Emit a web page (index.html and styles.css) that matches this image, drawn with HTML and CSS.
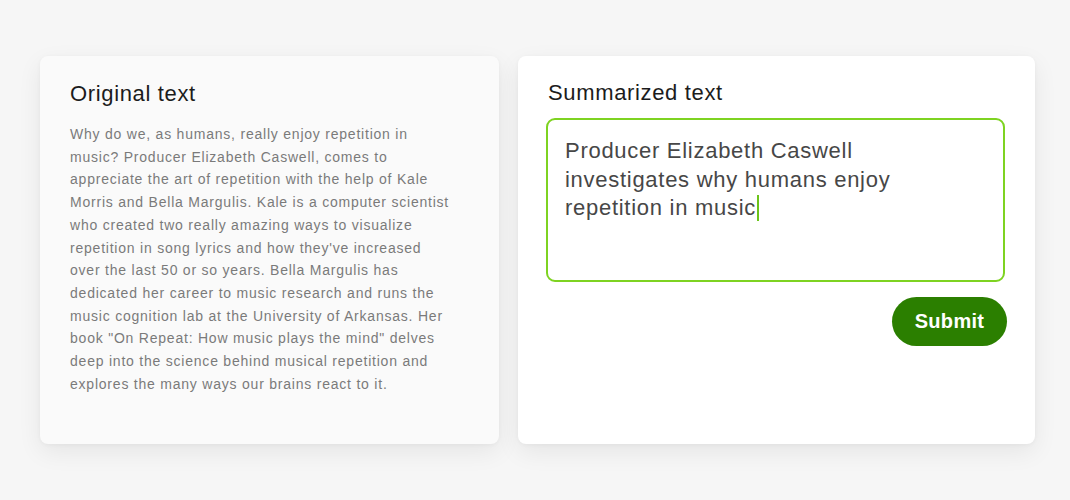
FILE: index.html
```html
<!DOCTYPE html>
<html lang="en">
<head>
<meta charset="utf-8">
<title>Summarize</title>
<link rel="stylesheet" href="styles.css">
</head>
<body>
<main class="page">
  <section class="card card-original">
    <h2 class="card-title">Original text</h2>
    <p class="original-body">Why do we, as humans, really enjoy repetition in music? Producer Elizabeth Caswell, comes to appreciate the art of repetition with the help of Kale Morris and Bella Margulis. Kale is a computer scientist who created two really amazing ways to visualize repetition in song lyrics and how they've increased over the last 50 or so years. Bella Margulis has dedicated her career to music research and runs the music cognition lab at the University of Arkansas. Her book "On Repeat: How music plays the mind" delves deep into the science behind musical repetition and explores the many ways our brains react to it.</p>
  </section>
  <section class="card card-summary">
    <h2 class="card-title summary-title">Summarized text</h2>
    <div class="summary-box">Producer Elizabeth Caswell<br>investigates why humans enjoy<br>repetition in music<span class="caret"></span></div>
    <div class="actions">
      <button class="submit" type="button">Submit</button>
    </div>
  </section>
</main>
</body>
</html>
```
FILE: styles.css
```css
* { box-sizing: border-box; }
html, body { margin: 0; padding: 0; }
body {
  background: #f6f6f6;
  font-family: "Liberation Sans", Arial, sans-serif;
  width: 1070px;
  height: 500px;
  overflow: hidden;
}
.page {
  display: flex;
  align-items: flex-start;
  gap: 19px;
  padding: 56px 0 0 40px;
}
.card {
  height: 388px;
  border-radius: 8px;
  box-shadow: 0 8px 24px rgba(0, 0, 0, 0.07), 0 1px 4px rgba(0, 0, 0, 0.04);
}
.card-original {
  width: 459px;
  background: #fafafa;
  padding: 23px 30px 0 30px;
}
.card-summary {
  width: 517px;
  background: #ffffff;
  padding: 22px 30px 0 28px;
}
.card-title {
  margin: 0;
  font-weight: normal;
  font-size: 22px;
  line-height: 30px;
  letter-spacing: 0.65px;
  color: #1c1c1c;
}
.summary-title { padding-left: 2px; }
.original-body {
  margin: 14px 0 0 0;
  max-width: 382px;
  font-size: 14px;
  line-height: 22.7px;
  letter-spacing: 0.78px;
  color: #7a7a7a;
}
.summary-box {
  margin-top: 10px;
  height: 164px;
  border: 2px solid #7ed321;
  border-radius: 9px;
  padding: 17px 17px 0 17px;
  font-size: 22px;
  line-height: 28.5px;
  letter-spacing: 0.72px;
  color: #474747;
}
.caret {
  display: inline-block;
  width: 2px;
  height: 26px;
  background: #6cc41a;
  vertical-align: -6px;
  margin-left: 1px;
}
.actions {
  display: flex;
  justify-content: flex-end;
  margin-top: 15px;
  margin-right: -2px;
}
.submit {
  width: 115px;
  height: 49px;
  border: none;
  border-radius: 25px;
  background: #2b7f00;
  color: #ffffff;
  font-family: "Liberation Sans", Arial, sans-serif;
  font-weight: bold;
  font-size: 20px;
  letter-spacing: 0.3px;
  cursor: pointer;
}
```
